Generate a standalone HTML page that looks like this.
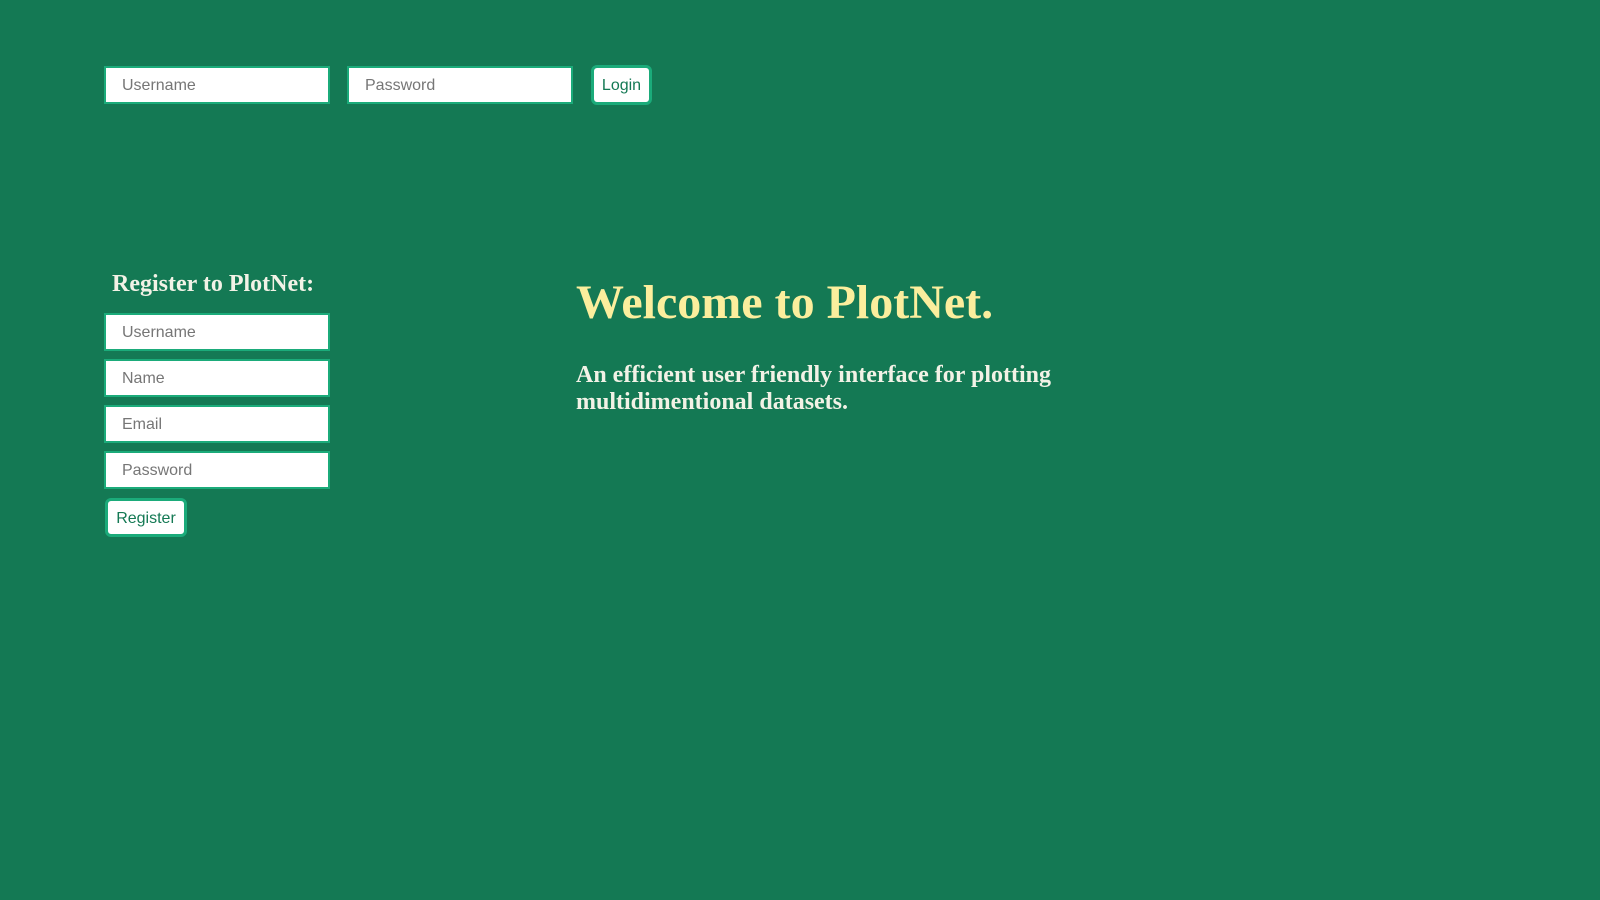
<!DOCTYPE html>
<html><head><style>
body{margin:0;width:1600px;height:900px;background:#147954;position:relative;overflow:hidden;font-family:"Liberation Sans",sans-serif}
.in{position:absolute;box-sizing:border-box;width:226px;height:38px;background:#fff;border:2px solid #1bab7a;font-size:16px;color:#767676;padding:1px 0 0 16px;line-height:34px}
.btn{position:absolute;box-sizing:border-box;background:#fff;border:3px solid #1bab7a;border-radius:6px;color:#147954;font-size:16px;text-align:center;padding-top:1px}
h2{position:absolute;margin:0;font-family:"Liberation Serif",serif;font-weight:bold;color:#f2f2e6;white-space:nowrap}
</style></head><body>
<div class="in" style="left:104px;top:66px">Username</div>
<div class="in" style="left:347px;top:66px">Password</div>
<div class="btn" style="left:591px;top:65px;width:61px;height:40px;line-height:34px">Login</div>
<h2 style="left:112px;top:271px;font-size:24px">Register to PlotNet:</h2>
<div class="in" style="left:104px;top:313px">Username</div>
<div class="in" style="left:104px;top:359px">Name</div>
<div class="in" style="left:104px;top:405px">Email</div>
<div class="in" style="left:104px;top:451px">Password</div>
<div class="btn" style="left:105px;top:498px;width:82px;height:39px;line-height:33px">Register</div>
<h2 style="left:576px;top:275px;font-size:48px;color:#fbee9d">Welcome to PlotNet.</h2>
<h2 style="left:576px;top:362px;font-size:24px;line-height:27px">An efficient user friendly interface for plotting<br>multidimentional datasets.</h2>
</body></html>
